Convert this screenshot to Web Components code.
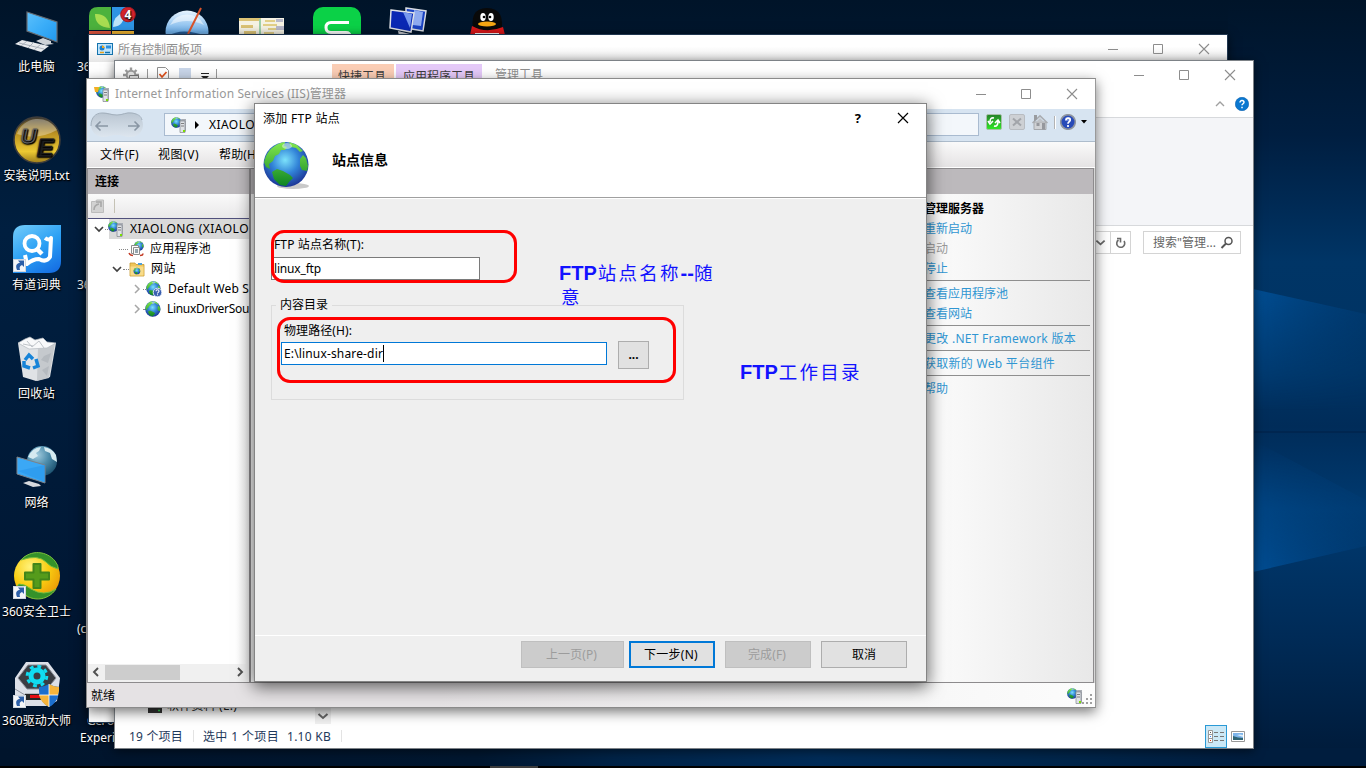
<!DOCTYPE html>
<html lang="zh-CN">
<head>
<meta charset="utf-8">
<title>添加 FTP 站点</title>
<style>
html,body{margin:0;width:1366px;height:768px;overflow:hidden;background:#001733}
body{font:12px/20px "Noto Sans","Noto Sans CJK SC",sans-serif;color:#000}
</style>
</head>
<body>
<ftp-desktop></ftp-desktop>
<script>
const define = (name, html, setup) => {
  const tpl = document.createElement('template');
  tpl.innerHTML = html;
  customElements.define(name, class extends HTMLElement {
    connectedCallback() {
      if (this.shadowRoot) return;
      this.attachShadow({mode: 'open'}).append(document.importNode(tpl.content, true));
      if (setup) setup(this, this.shadowRoot);
    }
  });
};

/* Icon library: [viewBox width, height, markup] */
const globe = `<defs><radialGradient id="g" cx=".48" cy=".4" r=".6"><stop offset="0" stop-color="#7ce2fb"/><stop offset=".5" stop-color="#3284d8"/><stop offset="1" stop-color="#1c3596"/></radialGradient><linearGradient id="l" x2="0" y2="1"><stop offset="0" stop-color="#84e84e"/><stop offset="1" stop-color="#0c8422"/></linearGradient></defs>`;
const globeBody = `<circle cx="23" cy="23.500" r="22.5" fill="url(#g)"/><path d="M3 15C7 7 14 2 22 1l-1 4 3 1-2 3-4 0-2 4-4 2-2 5-4 3 1 5-4-2-2-5zM9 31l5-3 6 2 7 4 3 3-4 4-3 4-6-1-6-6zM37 18l3-4 3 3 2 8-1 5-5-1-2-4zM26 1l8 3 6 6-3 1-4-4-5-1z" fill="url(#l)"/><ellipse cx="24" cy="5" rx="5" ry="3" fill="#d8efe4" opacity=".6"/>`;
const serverBody = `<path d="M9 3.500L10.500 2H15v12l-1 1H9z" fill="#a9adb4"/><path d="M9 4h5v11.500H9z" fill="#dfe2e6" stroke="#7f858c" stroke-width=".7"/><path d="M10 6.500h3M10 9h3" stroke="#666" stroke-width=".8"/><rect x="12" y="13" width="2" height="2" fill="#7be000"/>`;
const smallGlobe = (x, y, r) => `<g transform="translate(${x} ${y}) scale(${r / 23.500})">${globeBody}</g>`;
const arrow = `<rect x="0.5" y="34.5" width="12" height="12" fill="#f4f6f9" stroke="#cfd6de"/><path d="M4 45c-2-5 0-7 3-7l-2-2.500h6v6.500l-2-2C7 41 6 42 7 45z" fill="#2c5fa8"/>`;
const ICONS = {
  globe: [48, 48, globe + `<ellipse cx="30" cy="45" rx="16" ry="3" fill="#777" opacity=".4"/>` + globeBody],
  site: [16, 16, globe + smallGlobe(0, 0, 8)],
  siteq: [16, 16, globe + smallGlobe(0, 0, 7.5) + `<circle cx="11.500" cy="11.500" r="4.300" fill="#3a5fb0" stroke="#dfe7f7"/><path d="M10 10.300c0-2 3-2 3 0 0 1.200-1.500 1-1.500 2.200M11.500 13.300v1" stroke="#fff" fill="none" stroke-width="1.100"/>`],
  server: [16, 16, globe + smallGlobe(0, 0, 5.500) + serverBody],
  iis: [16, 16, globe + smallGlobe(2, 0, 6) + `<path d="M0 1l5 0-1 5-3 0z" fill="#f3ae22"/>` + serverBody],
  pool: [16, 16, globe + smallGlobe(6, 0, 5) + `<path d="M3.500 4.500h7v8h-7z" fill="#fff" stroke="#8c8c8c"/><path d="M5.500 6.500h6v7h-6z" fill="#f8f8f8" stroke="#8c8c8c"/><path d="M7 9h3M7 11h3" stroke="#356"/><path d="M1 12q1 2.500 4 2.500M12 14.500q3 0 3-2" stroke="#c33b25" stroke-width="1.500" fill="none"/>`],
  sites: [16, 16, globe + `<path d="M1 4V2h5l1 1.500h8V15H1z" fill="#f0c65a" stroke="#c79a31" stroke-width=".8"/><path d="M9 2h4v2H9z" fill="#4d9fd8"/><path d="M1.500 5.500h13v9h-13z" fill="#f8dc8a"/>` + smallGlobe(4.500, 6.500, 3.500)],
  down: [12, 12, `<path d="M2 4l4 4 4-4" fill="none" stroke="#404040" stroke-width="1.700"/>`],
  down2: [12, 12, `<path d="M1.500 4L6 8l4.500-4" fill="none" stroke="#666" stroke-width="2"/>`],
  left: [12, 12, `<path d="M8 2L4 6l4 4" fill="none" stroke="#505050" stroke-width="1.900"/>`],
  right: [12, 12, `<path d="M4 2l4 4-4 4" fill="none" stroke="#505050" stroke-width="1.900"/>`],
  rightg: [12, 12, `<path d="M4 2l4 4-4 4" fill="none" stroke="#a6a6a6" stroke-width="1.500"/>`],
  up: [12, 12, `<path d="M2 8l4-4 4 4" fill="none" stroke="#a0a0a0" stroke-width="1.400"/>`],
  tri: [6, 8, `<path d="M1 0l4 4-4 4z"/>`],
  drop: [6, 4, `<path d="M0 0h6L3 3.500z"/>`],
  nav: [54, 26, `<defs><linearGradient id="n" x2="0" y2="1"><stop offset="0" stop-color="#bac6d2"/><stop offset="1" stop-color="#dde6ef"/></linearGradient></defs><path d="M12 1C18 0 21 3 27 3S36 0 42 1C50 2 53 8 53 13S49 25 41 25 34 23 27 23s-8 2-14 2S1 20 1 13 5 2 12 1z" fill="url(#n)"/><path d="M1 14C1 5 6 1 12 1s9 2 15 2 9-3 15-2 9 3 10 7" fill="none" stroke="#a2afbc"/><path d="M18 14H6M10.500 9.500L6 14l4.500 4.500M38 14h11M44.500 9.500L49 14l-4.500 4.500" fill="none" stroke="#8996a4" stroke-width="1.600"/>`],
  refresh: [16, 16, `<defs><linearGradient id="r" x2="0" y2="1"><stop stop-color="#25802a"/><stop offset="1" stop-color="#2eea25"/></linearGradient></defs><rect x=".5" y=".5" width="15" height="15" rx="1.500" fill="url(#r)" stroke="#a6bfa6"/><path d="M8 4q-4-1-4 4M2 7l2 3 3-3M8 12q4 1 4-5M14 9l-2-3-3 3" stroke="#fff" stroke-width="1.600" fill="none"/>`],
  stop: [16, 16, `<rect x=".5" y=".5" width="15" height="15" rx="1.500" fill="#cdd0d4" stroke="#b8bcc1"/><path d="M4 4.500l8 7M12 4.500l-8 7" stroke="#a2a5aa" stroke-width="2"/>`],
  home: [16, 16, `<path d="M2 8h12v7.500H2z" fill="#d0d2d5" stroke="#a5a8ac"/><path d="M0 8.500L8 .8l8 7.700-1 1L8 3 1 9.500z" fill="#a9acb0"/><path d="M2 1h3v4L2 7.500z" fill="#999ca0"/><path d="M4 8l4-4 4 4z" fill="#bfc2c6"/><path d="M4.500 9h3v3h-3zM10 9h3v6.500h-3z" fill="#96989d"/>`],
  help: [16, 16, `<circle cx="8" cy="8" r="7.300" fill="#284bb8" stroke="#8f959e" stroke-width="1.600"/><path d="M5 4q3-2 6 0v3H5z" fill="#6a86dd"/><path d="M6 6.300c0-3 4.200-2.700 4.200-.2C10.200 8 8 7.600 8 9.700M8 11v2" fill="none" stroke="#fff" stroke-width="1.700"/>`],
  help2: [14, 14, `<circle cx="7" cy="7" r="6.700" fill="#0b78d0" stroke="#0860ae" stroke-width=".6"/><path d="M5 5.500c0-2.800 4-2.400 4-.2 0 1.500-2 1.400-2 3M7 9.800v1.500" fill="none" stroke="#fff" stroke-width="1.500"/>`],
  reload: [14, 14, `<path d="M4.500 4A4 4 0 1 0 10 5M3 2.500h3.500V6.500" fill="none" stroke="#6a6a6a" stroke-width="1.600"/>`],
  search: [14, 14, `<circle cx="8.500" cy="5" r="3.500" fill="none" stroke="#555" stroke-width="1.500"/><path d="M6 7.500L1.500 12" stroke="#555" stroke-width="2"/>`],
  conn: [16, 16, `<path d="M1.500 3.500h4l1-1.500h7v12.500h-12z" fill="#d2d2d2" stroke="#bcbcbc"/><path d="M4 12q0-5 5-6M6 4h5v5" stroke="#a8a8a8" stroke-width="1.600" fill="none"/>`],
  panel: [16, 12, `<rect x=".5" y=".5" width="15" height="11" fill="#bfe4fb" stroke="#1573ad"/><circle cx="5" cy="5" r="2.500" fill="#1b7fd0"/><path d="M5 5V2.500A2.500 2.500 0 0 1 7.500 5z" fill="#f4a71c"/><path d="M9 2.500h5v3H9z" fill="#2c8fdd"/><path d="M3 9.500h4" stroke="#e9a01b" stroke-width="1.500"/><path d="M8 9.500h5" stroke="#1573ad" stroke-width="1.500"/>`],
  gear: [16, 16, `<path d="M8 .5v3M2.500 3L5 5.500M13.500 3L11 5.500M0 8h4M12 8h4" stroke="#9a9a9a" stroke-width="2.400"/><circle cx="8" cy="8" r="4.300" fill="#e6e6e6" stroke="#9a9a9a" stroke-width="2"/><path d="M6.500 8.500h9v7h-9z" fill="#e2e2e2" stroke="#777"/>`],
  check: [12, 12, `<path d="M.5.500h8l3 3v9H.5z" fill="#fff" stroke="#8e8e8e"/><path d="M2.500 7l2.500 3 4.500-5" fill="none" stroke="#e0511b" stroke-width="1.800"/>`],
  details: [16, 13, `<path d="M.5.500h4v12h-4zM.5 4.500h4M.5 8.500h4" fill="#fff" stroke="#999"/><path d="M2 2.500h1" stroke="#555"/><path d="M2 6.500h1" stroke="#38f"/><path d="M2 10.500h1" stroke="#d30"/><path d="M6 2.500h4M12 2.500h4M6 6.500h4M12 6.500h4M6 10.500h4M12 10.500h4" stroke="#777"/>`],
  thumb: [14, 11, `<path d="M.5.500h13v10H.5z" fill="#fff" stroke="#999"/><path d="M2 2h10v7H2z" fill="#7db4ea"/><path d="M2 5l5 1.500 5 .5v2H2z" fill="#2f6474"/><path d="M6 4q3-1 6 0v2z" fill="#dcecf8"/>`],
  grip: [10, 10, `<path d="M8 0h2v2H8zM4 4h2v2H4zM8 4h2v2H8zM0 8h2v2H0zM4 8h2v2H4zM8 8h2v2H8z" fill="#a0a0a0"/>`],
  drive: [14, 10, `<path d="M1 0h12l1 5v5H0V5z" fill="#333"/><path d="M10 7.500h2" stroke="#2fd34a" stroke-width="1.500"/>`],
  pc: [48, 48, `<defs><linearGradient id="s" x2="1" y2="1"><stop stop-color="#5cc0fb"/><stop offset=".5" stop-color="#3aadf8"/><stop offset="1" stop-color="#2198ee"/></linearGradient></defs><path d="M14 5l30 10v20L14 24z" fill="url(#s)" stroke="#666c73" stroke-width="1.200"/><path d="M30 31l8 3v2l3 1-9 1-9-4z" fill="#cfd3d8"/><path d="M9 33l27 6-8 6L2 37z" fill="#e8eaed"/><path d="M6 36l25 6M14 34l-6 5M21 35l-6 6M28 37l-7 6" stroke="#a4abb5" stroke-width=".9"/>`],
  ue: [48, 48, `<defs><linearGradient id="u" x2="0" y2="1"><stop stop-color="#3d3830"/><stop offset=".35" stop-color="#b99022"/><stop offset=".75" stop-color="#edc932"/><stop offset="1" stop-color="#9d7d1c"/></linearGradient></defs><circle cx="24" cy="24" r="23" fill="url(#u)" stroke="#3e3d3b" stroke-width="1.600"/><path d="M4 18Q24 25 44 14A22 22 0 0 0 4 18z" fill="#fff" opacity=".32"/><text x="8" y="27" font-family="Liberation Sans" font-size="21" font-weight="bold" font-style="italic" fill="#55534f" stroke="#6a6a6a">U</text><text x="24" y="40" font-family="Liberation Sans" font-size="24" font-weight="bold" font-style="italic" fill="#222" stroke="#222">E</text>`],
  youdao: [48, 48, `<defs><linearGradient id="y" x1=".2" x2=".8" y2="1"><stop stop-color="#69c6f9"/><stop offset=".5" stop-color="#2ba0f4"/><stop offset="1" stop-color="#1670e4"/></linearGradient></defs><path d="M12 0h36v36Q48 48 36 48H0V12Q0 0 12 0z" fill="url(#y)"/><circle cx="19" cy="18.500" r="7.500" fill="none" stroke="#fff" stroke-width="3.800"/><path d="M24 24l5 5" stroke="#fff" stroke-width="4.500"/><path d="M32 13q4 3 6 0l-1 19q-4 6-11 2-6 0-12 5l-2-9" fill="none" stroke="#fff" stroke-width="4" stroke-linejoin="round"/>` + arrow],
  bin: [48, 48, `<path d="M5 9h38l-6 34-14 4-13-4z" fill="#dfe2e5"/><path d="M25 13l17-4-6 35-12 3z" fill="#c5c9cd"/><path d="M5 9l7-4 5-2 5 3 8-2 4 4 9 1-9 5-18 1z" fill="#f8f9fa" stroke="#b5bac0" stroke-width=".7"/><path d="M14 7l5 6 7-6 5 7M10 10l10 2" stroke="#bec3c8" fill="none"/><path d="M12 26l4-5 4 4M23 25l2 7-5 2M17 34l-6-2 0-5" fill="none" stroke="#1784d8" stroke-width="3.500"/><path d="M31 22l7-3-3 10-7-3zM29 36l7-4-2 10z" fill="#b5babf"/>`],
  net: [48, 48, `<defs><radialGradient id="w" cx=".35" cy=".3" r=".75"><stop stop-color="#9fcadd"/><stop offset=".5" stop-color="#4e8dab"/><stop offset="1" stop-color="#1d5371"/></radialGradient></defs><circle cx="29" cy="18" r="15" fill="url(#w)"/><path d="M15 14q4-9 13-10l-2 4-3 2 2 3-5 3zM31 4q8 1 12 8l1 7-5-3-2-6-5-2z" fill="#d5eaf0"/><path d="M4 14l28 8v18L4 31z" fill="#3ba8f5" stroke="#7c8289"/><path d="M5 28l27-6v17z" fill="#2492ea" opacity=".5"/><path d="M16 38l10 3 2 2-8 1-10-4z" fill="#d8dade"/>`],
  safe: [48, 48, `<defs><radialGradient id="a" cx=".35" cy=".3" r=".8"><stop stop-color="#fff27a"/><stop offset=".5" stop-color="#f9ce12"/><stop offset="1" stop-color="#e99405"/></radialGradient></defs><circle cx="24" cy="24" r="23" fill="url(#a)"/><path d="M8 8C18-3 34-1 42 9q4 5 3 8-8-2-12-7Q25 2 8 8zM5 36q-1-4 1-4 6 0 12 5 13 8 25 0C35 49 17 52 5 36z" fill="#35922a" stroke="#79bd3d"/><path d="M20.500 12h7v8.500h8.500v7h-8.500v8.500h-7v-8.500H12v-7h8.500z" fill="#559b1b" stroke="#41851a" stroke-linejoin="round" stroke-width="2"/>` + arrow],
  drv: [48, 48, `<path d="M13 1h22l12 16-3 23-9 5H12L2 34V17z" fill="#dce0e8"/><path d="M15 4h18l10 13-9 11H14L5 17z" fill="#3a3d43" stroke="#8b909a"/><path d="M2 28l10 6v11M12 33h26" stroke="#8f949d" fill="none"/><path d="M12 33h26v6H12z" fill="#272727"/><path d="M17 34h14v3H17z" fill="#e60c12"/><circle cx="24" cy="15" r="6" fill="none" stroke="#10dcf1" stroke-width="5"/><circle cx="24" cy="15" r="9.800" fill="none" stroke="#10dcf1" stroke-width="3" stroke-dasharray="3.850 3.850"/><path d="M26 26q5 0 10-3 5 3 10 3 1 14-10 20-11-6-10-20z" fill="#1c6fcd"/><path d="M36 23q5 3 10 3 .5 4-1 8H36zM26 34h10v12q-8-4-10-12z" fill="#f6b43a"/><path d="M36 34h9q-2 8-9 12z" fill="#1c6fcd"/><path d="M36 23v23M26 34h19" stroke="#fff" stroke-width=".8"/>` + arrow],
  four: [48, 48, `<path d="M10 0h13v23H1V9Q1 0 10 0z" fill="#4cb23d"/><path d="M24 0h13q9 0 9 9v14H24z" fill="#2e94e4"/><path d="M1 24h22v23H1z" fill="#e1553e"/><path d="M24 24h22v23H24z" fill="#efb331"/><path d="M7 7q13-1 15 14Q7 20 7 7z" fill="#a8dd51"/><path d="M36 5q-11 4-11 15 12-1 11-15z" fill="#bde4fb"/><circle cx="40" cy="7.500" r="7.300" fill="#d3232b" stroke="#a4191f"/><text x="36.500" y="12" font-family="Noto Sans" font-weight="bold" font-size="12" fill="#fff">4</text>`],
  bird: [48, 48, `<defs><linearGradient id="b" x2="0" y2="1"><stop stop-color="#e9f5ff"/><stop offset=".5" stop-color="#6fb0ea"/><stop offset="1" stop-color="#dceefc"/></linearGradient></defs><circle cx="24" cy="25" r="21.500" fill="url(#b)"/><path d="M7 18Q24 10 41 18A19 19 0 0 0 7 18z" fill="#fff" opacity=".5"/><path d="M5 29q14-9 38 0z" fill="#245a94"/><path d="M38 1L25 27" stroke="#d9532a" stroke-width="2"/>`],
  sheet: [48, 48, `<path d="M1 11h45v37H1z" fill="#f6f3e4"/><path d="M1 11h22v3H1zM3 18h12v3H3zM6 24h12v3H6z" fill="#dcc375"/><path d="M22 12v20" stroke="#9fd0a8" stroke-width="2"/><path d="M27 14h10M25 18h14M30 22h9M26 26h10" stroke="#e2cf87" stroke-width="2"/><path d="M38 12h7v3h-7zM38 19h8v4h-8z" fill="#b9b9ca"/>`],
  green: [48, 48, `<rect width="48" height="48" rx="10" fill="#0bd147"/><path d="M36 15.500H18q-5 0-5 5t5 5h15q4 0 4 4" stroke="#fff" stroke-width="3" fill="none"/>`],
  remote: [48, 48, `<path d="M24 1l20 3-3 20-17-3z" fill="#1a42c2" stroke="#d9dde3" stroke-width="1.500"/><path d="M32 3l9 2-2 14-8-1z" fill="#8fabf0"/><path d="M9 3l23 3-3 19-21-4z" fill="#0a28b4" stroke="#dfe2e7" stroke-width="1.500"/><path d="M21 5l9 2-2 14z" fill="#7698ee"/><path d="M16 24l12 3-2 7H9l8-5z" fill="#c4c8ce"/>`],
  qq: [48, 48, `<path d="M11 27Q5 1 24 1t14 26z" fill="#090909"/><ellipse cx="20" cy="10" rx="2.700" ry="4" fill="#fff"/><ellipse cx="28" cy="10" rx="2.700" ry="4" fill="#fff"/><circle cx="21" cy="10" r="1.300"/><circle cx="27" cy="10" r="1.300"/><ellipse cx="24" cy="17" rx="9" ry="2.500" fill="#f6a613"/><path d="M9 19q14 8 31 1l2 8H7z" fill="#dc1719"/><path d="M12 26h24v9H12z" fill="#fff"/>`]
};
define('ui-icon', `<style>:host{display:block;flex:none;line-height:0}svg{display:block}</style>`, (h, root) => {
  const icon = ICONS[h.getAttribute('name')];
  if (!icon) return;
  const [w, ht, body] = icon;
  const s = +(h.getAttribute('size') || w);
  const box = document.createElement('div');
  box.innerHTML = `<svg width="${s}" height="${s * ht / w}" viewBox="0 0 ${w} ${ht}">${body}</svg>`;
  root.append(box);
});

/* A single line of text, tracked to an optional total width */
define('ui-text', `<style>:host{display:block;flex:none;white-space:pre}span{display:inline-block}</style><span><slot></slot></span>`, (h, root) => {
  const w = +h.getAttribute('w');
  if (!w) return;
  const span = root.querySelector('span');
  const n = [...h.textContent].length;
  span.style.letterSpacing = ((w - span.getBoundingClientRect().width) / n).toFixed(3) + 'px';
});

define('win-controls', `<style>:host{display:flex;flex:none;color:#8d8d8d}svg{display:block}</style>
<svg width="102" height="12" viewBox="0 0 102 12" fill="none" stroke="currentColor"><path d="M0 6.500h10M45.500 1.500h9v9h-9z"/><path d="M91 1l10 10M101 1L91 11" stroke-width="1.100"/></svg>`);

define('desk-wallpaper', `<style>:host{display:block}svg{display:block}</style>
<svg width="1366" height="768" viewBox="0 0 1366 768"><defs>
<linearGradient id="left" x2="0" y2="1"><stop stop-color="#001429"/><stop offset=".3" stop-color="#001f40"/><stop offset=".75" stop-color="#001835"/><stop offset="1" stop-color="#00142c"/></linearGradient>
<linearGradient id="foot"><stop stop-color="#00142c"/><stop offset=".35" stop-color="#001730"/><stop offset=".45" stop-color="#002347"/><stop offset=".6" stop-color="#002c58"/><stop offset=".75" stop-color="#00274d"/><stop offset=".92" stop-color="#001d3e"/></linearGradient>
<linearGradient id="rv" x2="0" y2="1"><stop stop-color="#001429"/><stop offset=".18" stop-color="#001e40"/><stop offset=".28" stop-color="#002b56"/><stop offset=".35" stop-color="#003566"/><stop offset=".5" stop-color="#003363"/><stop offset=".57" stop-color="#002c59"/><stop offset=".68" stop-color="#003a70"/><stop offset=".85" stop-color="#002b57"/><stop offset="1" stop-color="#001c3c"/></linearGradient>
<linearGradient id="beam"><stop stop-color="#0056a2" stop-opacity=".8"/><stop offset="1" stop-color="#004585" stop-opacity=".35"/></linearGradient>
<linearGradient id="fadeDown" x2="0" y2="1"><stop stop-color="#fff"/><stop offset="1" stop-color="#000"/></linearGradient><linearGradient id="fadeUp" x2="0" y2="1"><stop stop-color="#000"/><stop offset="1" stop-color="#fff"/></linearGradient>
<mask id="m1"><path d="M1253 285h113v125h-113z" fill="url(#fadeDown)"/></mask><mask id="m2"><path d="M1253 440h113v135h-113z" fill="url(#fadeUp)"/></mask></defs>
<path d="M0 0h1366v768H0z" fill="url(#left)"/><path d="M0 748h1366v20H0z" fill="url(#foot)"/>
<path d="M1228 0h138v748h-138z" fill="url(#rv)"/>
<path d="M1253 289l113 25v96h-113z" fill="url(#beam)" mask="url(#m1)"/><path d="M1253 440l113 60v46l-113 26z" fill="url(#beam)" mask="url(#m2)"/>
<path d="M1253 432h113" stroke="#00234a" stroke-width="2" opacity=".6"/></svg>`);

define('desk-icon', `<style>:host{display:flex;flex-direction:column;align-items:center;color:#fff;height:109px;width:75px;text-shadow:0 1px 2px #000,1px 1px 1px #000}ui-icon{height:48px;margin-bottom:2px}</style><slot></slot>`, (h, root) => {
  const ic = document.createElement('ui-icon');
  ic.setAttribute('name', h.getAttribute('icon'));
  root.querySelector('slot').before(ic);
});

define('control-window', `<style>
:host{display:block;box-sizing:border-box;background:#fff;border:1px solid #20364f;box-shadow:0 2px 10px #0009}
header{display:flex;align-items:center;height:26px;padding:1px 17px 0 8px;color:#8f8f8f;background:linear-gradient(#fff 45%,#e6e6e6)}
ui-text{margin:1px auto 0 5px}
</style><header><ui-icon name="panel"></ui-icon><ui-text w="84">所有控制面板项</ui-text><win-controls></win-controls></header>`);

define('explorer-window', `<style>
:host{display:flex;flex-direction:column;box-sizing:border-box;background:#fff;border:1px solid #7d8287;box-shadow:0 2px 10px #0008;color:#1e395b}
.title{display:flex;align-items:flex-start;height:31px;padding:0 17px 0 8px;box-sizing:border-box;color:#8f8f8f}
.title>ui-icon{margin-top:6px}.title i{width:1px;height:14px;background:#999;margin:8px 9px 0 8px}
.sq{width:12px;height:14px;background:#c9d6e9;margin:7px 10px 0 10px}
.dd{width:0;border:4px solid transparent;border-bottom:0;border-top:4px solid #222;margin:15px -1px 0 0;position:relative}
.dd::before{content:"";position:absolute;left:-4px;top:-7px;width:8px;height:1px;background:#222}
.tab{margin:3px 2px 0 0;height:28px;line-height:26px;color:#3d3d3d}
.title win-controls{margin:8px 0 0 auto}
.tools{display:flex;justify-content:flex-end;align-items:center;gap:9px;height:24px;padding:0 4px 1px 0}
.ribbon{height:107px;background:#f4f5f8;border:solid #d7d9dc;border-width:1px 0}
.addr{display:flex;justify-content:flex-end;padding:5px 12px 0;gap:12px}
.box{display:flex;align-items:center;height:21px;border:1px solid #d4d4d4;color:#666}
.find{width:87px;padding-left:9px;gap:4px}
.b{width:19px;justify-content:center}
.mid{flex:1;display:flex;align-items:flex-end;padding-left:33px}
.file{display:flex;gap:5px;width:167px;height:28px;overflow:hidden;color:#222}.file ui-icon{padding-top:7px}
.sc{width:16px;height:16px;padding-top:6px;background:#f0f0f0;display:flex;align-items:center;justify-content:center}
footer{display:flex;height:24px;padding:0 8px 0 14px;align-items:center}
footer ui-text{padding-top:1px}
footer i{width:1px;height:12px;background:#e3e3e3}
.view{display:flex;align-items:center;justify-content:center;width:20px;height:21px;border:1px solid #2a9ad6;background:#cbe8f6;margin:0 4px 0 auto}
</style>
<div class="title"><ui-icon name="gear"></ui-icon><i></i><ui-icon name="check"></ui-icon><div class="sq"></div><div class="dd"></div><i style="margin-right:115px"></i>
<div class="tab" style="background:#fbceb6;padding:0 8px 0 6px;width:48px"><ui-text w="48">快捷工具</ui-text></div><div class="tab" style="background:#e5caf9;padding:0 7px;width:72px"><ui-text w="72">应用程序工具</ui-text></div><ui-text w="48" style="margin:4px 0 0 11px">管理工具</ui-text><win-controls></win-controls></div>
<div class="tools"><ui-icon name="up"></ui-icon><ui-icon name="help2"></ui-icon></div>
<div class="ribbon"></div>
<div class="addr"><div style="display:flex"><div class="box b"><ui-icon name="down2" size="11"></ui-icon></div><div class="box b" style="border-left:0"><ui-icon name="reload"></ui-icon></div></div><div class="box find"><ui-text w="63">搜索"管理...</ui-text><ui-icon name="search"></ui-icon></div></div>
<div class="mid"><div class="file"><ui-icon name="drive"></ui-icon><ui-text w="70">软件资料 (E:)</ui-text></div><div class="sc"><ui-icon name="down2"></ui-icon></div></div>
<footer><ui-text w="54">19 个项目</ui-text><i style="margin:0 9px 0 10px"></i><ui-text w="76">选中 1 个项目</ui-text><ui-text w="44" style="margin-left:8px">1.10 KB</ui-text><i style="margin-left:10px"></i><div class="view"><ui-icon name="details"></ui-icon></div><ui-icon name="thumb"></ui-icon></footer>`);

define('tree-row', `<style>:host{display:flex;align-items:center;height:20px;white-space:nowrap}b{display:block;width:var(--d,8px);border-top:1px dotted #888}.i{margin-right:6px}</style><b></b><slot></slot>`, (h, root) => {
  const make = (cls, name, size) => {
    const el = document.createElement('ui-icon');
    el.className = cls; el.setAttribute('name', name); el.setAttribute('size', size);
    return el;
  };
  if (h.hasAttribute('caret')) root.querySelector('b').before(make('c', h.getAttribute('caret'), 12));
  root.querySelector('slot').before(make('i', h.getAttribute('icon'), 16));
});

define('iis-window', `<style>
:host{display:flex;flex-direction:column;box-sizing:border-box;background:#fff;border:1px solid #8b8b8b;box-shadow:0 4px 12px #0008;border-right-color:#999}
.title{display:flex;align-items:center;height:30px;padding:0 17px 0 7px;color:#999;box-sizing:border-box}
.title ui-text{margin:0 auto 0 5px}
.addr{display:flex;align-items:center;height:33px;background:#d7e4f1;border-bottom:1px solid #adbccc;padding:0 8px 1px 3px;box-sizing:border-box}
.path{display:flex;align-items:center;box-sizing:border-box;width:816px;height:23px;border:1px solid #a9bbd0;background:#f3f7fb;margin:0 7px 0 20px;padding-left:6px}
.acts{display:flex;gap:7px;align-items:center;padding-bottom:5px}.acts i{width:1px;height:13px;background:#b3b3b3;box-shadow:1px 0 #fff;margin:0 -2px 0 -1px}
.menu{display:flex;height:25px;padding:0 13px;gap:19px;background:linear-gradient(#fafafa,#e5e3e4);align-items:center}
.panes{display:flex;justify-content:space-between;height:515px;margin-top:1px;background:linear-gradient(90deg,#fff,#d7d7d7);padding-right:1px}
.pane{box-sizing:border-box;border:1px solid #8d8b8d;overflow:hidden;display:flex;flex-direction:column}
h2{margin:0;height:25px;line-height:26px;font-size:12px;background:#bcb9bc;padding-left:7px;flex:none}
.left{width:163px;background:linear-gradient(90deg,#fff 92%,#eee)}
.tool{display:flex;align-items:center;gap:8px;height:24px;padding-left:2px;background:linear-gradient(#fafafa,#e9e8e9);border-bottom:1px solid #50507c;flex:none}.tool i{width:1px;height:14px;background:#c5c2b5}
.tree{flex:1}
.scroll{display:flex;align-items:center;height:16px;background:#f0f0f0;padding:0 3px 2px 2px}.scroll i{width:75px;height:15px;background:#cdcdcd;margin:0 auto 0 3px}
.right{width:844px;background:linear-gradient(90deg,#fafafa 82%,#e8e8e8);color:#3096d2}
.links{padding:5px 3px 0 673px;display:flex;flex-direction:column}
hr{margin:1px 0 3px;border:0;border-top:1px solid #8f8f8f;align-self:stretch}
footer{display:flex;align-items:center;flex:1;padding:1px 3px 0 4px;background:linear-gradient(90deg,#e5e2e4 35%,#f8f8f8 85%,#fcfcfc)}
</style>
<div class="title"><ui-icon name="iis"></ui-icon><ui-text w="231">Internet Information Services (IIS)管理器</ui-text><win-controls></win-controls></div>
<div class="addr"><ui-icon name="nav"></ui-icon><div class="path"><ui-icon name="server"></ui-icon><ui-icon name="tri" style="margin:0 9px 0 7px"></ui-icon><ui-text w="46">XIAOLO</ui-text></div>
<div class="acts"><ui-icon name="refresh"></ui-icon><ui-icon name="stop"></ui-icon><ui-icon name="home"></ui-icon><i></i><ui-icon name="help"></ui-icon><ui-icon name="drop" style="margin-left:-2px"></ui-icon></div></div>
<div class="menu"><ui-text w="39">文件(F)</ui-text><ui-text w="41">视图(V)</ui-text><ui-text w="37" style="margin-left:1px">帮助(H</ui-text></div>
<div class="panes"><div class="pane left"><h2>连接</h2><div class="tool"><ui-icon name="conn"></ui-icon><i></i></div>
<div class="tree"><tree-row caret="down" icon="server" style="--d:7px;margin-left:5px;background:linear-gradient(90deg,#fff 16px,#d9d9d9 16px)"><ui-text w="119">XIAOLONG (XIAOLO</ui-text></tree-row>
<tree-row icon="pool" style="--d:9px;margin-left:31px"><ui-text w="61">应用程序池</ui-text></tree-row>
<tree-row caret="down" icon="sites" style="--d:6px;margin-left:23px"><ui-text w="25">网站</ui-text></tree-row>
<tree-row caret="rightg" icon="siteq" style="--d:7px;margin-left:43px"><ui-text w="81">Default Web S</ui-text></tree-row>
<tree-row caret="rightg" icon="site" style="--d:7px;margin-left:43px"><ui-text w="82">LinuxDriverSou</ui-text></tree-row></div>
<div class="scroll"><ui-icon name="left"></ui-icon><i></i><ui-icon name="right"></ui-icon></div></div>
<div class="pane right"><h2></h2><div class="links"><ui-text w="60" style="color:#000;font-weight:bold">管理服务器</ui-text><ui-text w="48">重新启动</ui-text><ui-text w="24" style="color:#9a9a9a">启动</ui-text><ui-text w="24">停止</ui-text><hr><ui-text w="84">查看应用程序池</ui-text><ui-text w="48">查看网站</ui-text><hr><ui-text w="152">更改 .NET Framework 版本</ui-text><hr><ui-text w="131">获取新的 Web 平台组件</ui-text><hr><ui-text w="24">帮助</ui-text></div></div></div>
<footer><ui-text w="24" style="margin-right:auto">就绪</ui-text><ui-icon name="server"></ui-icon><ui-icon name="grip" style="margin:7px 0 0 -1px"></ui-icon></footer>`);

define('ui-button', `<style>:host{display:flex;align-items:center;justify-content:center;box-sizing:border-box;width:86px;height:27px;background:#e1e1e1;border:1px solid #adadad}:host([disabled]){background:#ccc;border-color:#bfbfbf;color:#9c9c9c;padding-right:2px}:host([primary]){border:2px solid #0078d7;padding-right:2px}</style><slot></slot>`);

define('ftp-dialog', `<style>
:host{display:flex;flex-direction:column;box-sizing:border-box;background:#efefef;border:1px solid #848484;box-shadow:0 4px 16px 1px #0009}
header{background:#fff;height:93px;border-bottom:1px solid #a0a0a0;box-shadow:0 1px #fff}
.bar{display:flex;align-items:center;height:28px;padding:0 17px 0 8px}
.bar svg{display:block}
.head{display:flex;padding:9px 8px 0 8px;gap:21px}
.head ui-text{font-size:14px;font-weight:bold;margin-top:9px}
main{flex:1;padding:37px 0 0 16px}
.in{display:block;box-sizing:border-box;background:#fff;border:1px solid #7a7a7a;height:23px;padding-left:2px;line-height:21px}
fieldset{box-sizing:border-box;width:413px;height:105px;margin:15px 0 0;border:1px solid #dcdcdc;padding:6px 0 0 9px;min-width:0}
legend{padding:0 4px 0 4px;margin-left:-5px;height:20px}
.row{display:flex;gap:11px;align-items:flex-start}
.caret{display:block;width:1px;height:17px;background:#000;flex:none;margin-top:2px}
footer{display:flex;justify-content:flex-end;height:46px;box-sizing:border-box;border-top:1px solid #fff;padding:5px 19px 0 0;gap:10px}
</style>
<header><div class="bar"><ui-text w="77" style="margin:1px auto 0 0">添加 FTP 站点</ui-text><b style="margin-right:36px;font-size:13px">?</b><svg width="12" height="12" stroke="#000" stroke-width="1.200"><path d="M1 1l10 10M11 1L1 11"/></svg></div>
<div class="head"><ui-icon name="globe"></ui-icon><ui-text w="56">站点信息</ui-text></div></header>
<main><ui-text w="90" style="margin-left:3px">FTP 站点名称(T):</ui-text><div class="in" style="width:209px;margin-top:2px"><ui-text w="47">linux_ftp</ui-text></div>
<fieldset><legend><ui-text w="48">内容目录</ui-text></legend><ui-text w="68" style="margin:0 0 0 3px">物理路径(H):</ui-text>
<div class="row"><div class="in" style="width:326px;display:flex;margin-top:1px;border-color:#0078d7"><ui-text w="99">E:\\linux-share-dir</ui-text><span class="caret"></span></div><ui-button style="width:31px;height:28px"><b>...</b></ui-button></div></fieldset></main>
<footer><ui-button disabled style="width:103px;margin-right:-5px"><ui-text w="51">上一页(P)</ui-text></ui-button><ui-button primary><ui-text w="54">下一步(N)</ui-text></ui-button><ui-button disabled><ui-text w="38">完成(F)</ui-text></ui-button><ui-button><ui-text w="24">取消</ui-text></ui-button></footer>`);

define('mark-box', `<style>:host{display:block;box-sizing:border-box;border:3px solid #f00;border-radius:13px}</style>`);
define('mark-note', `<style>:host{display:block;font:400 18.500px/24px "Noto Sans CJK SC",sans-serif;letter-spacing:2.200px;color:#1212ff}</style><slot></slot>`);

define('ftp-desktop', `<style>
:host{display:block;position:relative;width:1366px;height:768px;overflow:hidden}
desk-wallpaper,.icons,.top,control-window,explorer-window,iis-window,ftp-dialog,mark-box,mark-note,.task{position:absolute}
.icons{left:-1px;top:7px;display:grid;grid-template-rows:repeat(7,109px);grid-auto-flow:column;grid-auto-columns:75px}
.part{color:#fff;width:75px;height:109px;padding:50px 0 0 3px;box-sizing:border-box;text-shadow:1px 1px 2px #000}
.top{left:74px;top:7px;display:flex}
control-window{left:88px;top:34px;width:1140px;height:689px}
explorer-window{left:114px;top:60px;width:1140px;height:689px}
iis-window{left:86px;top:78px;width:1010px;height:630px}
ftp-dialog{left:254px;top:103px;width:673px;height:579px}
.task{left:0;top:766px;width:1366px;height:2px;background:linear-gradient(90deg,#000 490px,#3c3c3c 490px 538px,#000 538px)}
mark-note b{font-family:"Liberation Sans",sans-serif;font-size:20px;line-height:20px;font-weight:700;letter-spacing:0}
mark-note b:first-child{margin-right:1px}
mark-note ui-text{height:24px}
</style>
<desk-wallpaper></desk-wallpaper>
<div class="icons"><desk-icon icon="pc"><ui-text w="37">此电脑</ui-text></desk-icon><desk-icon icon="ue"><ui-text w="66">安装说明.txt</ui-text></desk-icon><desk-icon icon="youdao"><ui-text w="49">有道词典</ui-text></desk-icon><desk-icon icon="bin"><ui-text w="37">回收站</ui-text></desk-icon><desk-icon icon="net"><ui-text w="24">网络</ui-text></desk-icon><desk-icon icon="safe"><ui-text w="69">360安全卫士</ui-text></desk-icon><desk-icon icon="drv"><ui-text w="69">360驱动大师</ui-text></desk-icon>
<div class="part">36</div><div class="part"></div><div class="part">36</div><div class="part"></div><div class="part"></div><div class="part" style="padding-top:67px">(c</div><div class="part" style="padding-left:6px"><ui-text w="36" style="padding-left:7px">GeForc</ui-text><ui-text w="35" style="margin-top:-3px">Experi</ui-text></div></div>
<div class="top"><desk-icon icon="four"></desk-icon><desk-icon icon="bird"></desk-icon><desk-icon icon="sheet"></desk-icon><desk-icon icon="green"></desk-icon><desk-icon icon="remote" style="margin-right:-1px;margin-left:-6px;padding-right:7px"></desk-icon><desk-icon icon="qq"></desk-icon></div>
<control-window></control-window><explorer-window></explorer-window><iis-window></iis-window><ftp-dialog></ftp-dialog>
<mark-box style="left:271px;top:230px;width:246px;height:53px"></mark-box>
<mark-box style="left:277px;top:317px;width:399px;height:66px"></mark-box>
<mark-note style="left:559px;top:260px"><ui-text><b>FTP</b>站点名称<b>--</b>随</ui-text><ui-text style="margin-left:2px">意</ui-text></mark-note>
<mark-note style="left:740px;top:359px"><ui-text><b>FTP</b>工作目录</ui-text></mark-note>
<div class="task"></div>`);
</script>
</body>
</html>
